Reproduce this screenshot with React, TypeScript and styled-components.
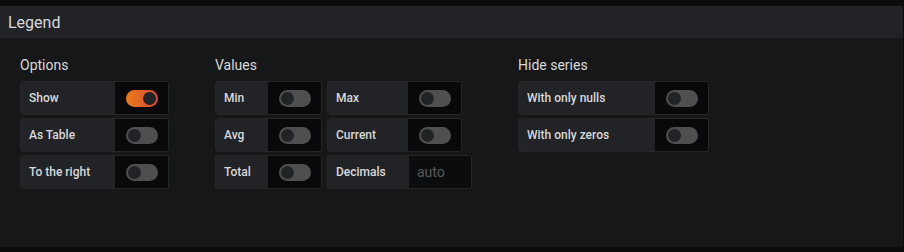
import React from "react";
import styled, { createGlobalStyle } from "styled-components";

const Global = createGlobalStyle`
  html, body { margin: 0; padding: 0; background: #0b0c0e; }
  body { font-family: Roboto, "Liberation Sans", Arial, sans-serif; color: #d8d9da; }
`;

const Page = styled.div`
  width: 904px;
  height: 252px;
  padding: 6px 1px 5px 0;
  box-sizing: border-box;
  background: #0b0c0e;
`;

const Panel = styled.section`
  height: 100%;
  background: #161719;
  border-radius: 0 0 3px 3px;
  display: flex;
  flex-direction: column;
`;

const Header = styled.header`
  height: 32px;
  background: #222327;
  display: flex;
  align-items: center;
  padding-left: 8px;
  font-size: 16px;
  color: #d8d9da;
`;

const Body = styled.div`
  display: flex;
  gap: 46px;
  padding: 18px 20px 0 20px;
`;

const Section = styled.div`
  display: flex;
  flex-direction: column;
`;

const SectionTitle = styled.h5`
  margin: 0 0 7px 0;
  font-size: 14px;
  font-weight: 400;
  line-height: 18px;
  color: #d8d9da;
`;

const Columns = styled.div`
  display: flex;
  gap: 5px;
`;

const Stack = styled.div`
  display: flex;
  flex-direction: column;
  align-items: flex-start;
  gap: 3px;
`;

const Row = styled.div`
  display: flex;
  height: 34px;
  box-sizing: border-box;
  border: 1px solid #26272b;
  border-radius: 3px;
  overflow: hidden;
`;

const Label = styled.div<{ $w: number }>`
  width: ${(p) => p.$w}px;
  box-sizing: border-box;
  background: #222327;
  display: flex;
  align-items: center;
  padding-left: 8px;
  font-size: 12px;
  font-weight: 500;
  color: #d8d9da;
  white-space: nowrap;
`;

const SwitchArea = styled.div`
  width: 53px;
  background: #09090b;
  display: flex;
  align-items: center;
  justify-content: center;
`;

const Track = styled.div<{ $on: boolean }>`
  width: 32px;
  height: 17px;
  border-radius: 9px;
  box-sizing: border-box;
  display: flex;
  align-items: center;
  justify-content: ${(p) => (p.$on ? "flex-end" : "flex-start")};
  padding: 0 2px;
  background: ${(p) =>
    p.$on ? "linear-gradient(90deg, #eb7b18, #d44a3a)" : "#4f4f50"};
`;

const Knob = styled.div`
  width: 13px;
  height: 13px;
  border-radius: 50%;
  background: #222326;
`;

const Input = styled.div`
  width: 62px;
  box-sizing: border-box;
  background: #0b0c0e;
  display: flex;
  align-items: center;
  padding-left: 8px;
  font-size: 14px;
  color: #5a5a5c;
`;

const Toggle = ({ label, w, on = false }: { label: string; w: number; on?: boolean }) => (
  <Row>
    <Label $w={w}>{label}</Label>
    <SwitchArea>
      <Track $on={on}>
        <Knob />
      </Track>
    </SwitchArea>
  </Row>
);

export default function App() {
  return (
    <Page>
      <Global />
      <Panel>
        <Header>Legend</Header>
        <Body>
          <Section>
            <SectionTitle>Options</SectionTitle>
            <Stack>
              <Toggle label="Show" w={94} on />
              <Toggle label="As Table" w={94} />
              <Toggle label="To the right" w={94} />
            </Stack>
          </Section>
          <Section>
            <SectionTitle>Values</SectionTitle>
            <Columns>
              <Stack>
                <Toggle label="Min" w={52} />
                <Toggle label="Avg" w={52} />
                <Toggle label="Total" w={52} />
              </Stack>
              <Stack>
                <Toggle label="Max" w={80} />
                <Toggle label="Current" w={80} />
                <Row>
                  <Label $w={81}>Decimals</Label>
                  <Input>auto</Input>
                </Row>
              </Stack>
            </Columns>
          </Section>
          <Section>
            <SectionTitle>Hide series</SectionTitle>
            <Stack>
              <Toggle label="With only nulls" w={136} />
              <Toggle label="With only zeros" w={136} />
            </Stack>
          </Section>
        </Body>
      </Panel>
    </Page>
  );
}
